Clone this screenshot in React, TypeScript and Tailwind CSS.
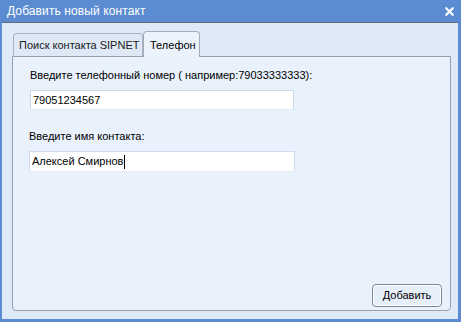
import { X } from 'lucide-react';

export default function App() {
  return (
    <div className="w-[461px] h-[322px] bg-[#5b8cd1] flex flex-col font-['Liberation_Sans',Arial,sans-serif] text-[11px] text-black select-none">
      {/* Title bar */}
      <div className="h-[22px] flex items-center justify-between pl-[7px] pr-[5px] shrink-0">
        <span className="text-white text-[12px] tracking-[0.1px]">Добавить новый контакт</span>
        <X className="text-white" size={13} strokeWidth={4} />
      </div>
      <div className="h-px bg-[#5f6b7c] ml-[2px] mr-[3px]" />

      {/* Body */}
      <div className="flex-1 ml-[2px] mr-[3px] mb-[3px] bg-[#dfeaf8] flex flex-col pl-[10px] pr-[7px] pt-[8px] pb-[8px]">
        {/* Tabs */}
        <div className="flex items-end h-[25px] pl-[1px]">
          <div className="h-[23px] w-[130px] pl-[5px] flex items-center bg-[#dfe9f6] border border-b-0 border-[#a9b4c2] rounded-t-[4px] text-[#1a1a1a]">
            Поиск контакта SIPNET
          </div>
          <div className="h-[26px] w-[57px] -mb-px relative z-10 pl-[6px] flex items-start pt-[5px] bg-[#eaf2fc] border border-b-0 border-[#a3adba] rounded-t-[4px]">
            Телефон
          </div>
        </div>

        {/* Panel */}
        <div className="flex-1 bg-[#e8f1fc] border border-[#9a9fa8] rounded-b-[4px] flex flex-col pl-[17px] pt-[11px] pr-[8px] pb-[3px]">
          <div className="leading-[14px]">Введите телефонный номер ( например:79033333333):</div>
          <div className="mt-[8px] w-[264px] h-[20px] bg-white border border-[#cfdbec] border-b-[#e4ecf6] flex items-center pl-[2px]">
            79051234567
          </div>

          <div className="mt-[19px] -ml-px leading-[14px]">Введите имя контакта:</div>
          <div className="mt-[8px] -ml-px w-[266px] h-[21px] bg-white border border-[#cfdbec] border-b-[#e4ecf6] flex items-center pl-[2px]">
            Алексей Смирнов<span className="inline-block w-px h-[14px] bg-black ml-px" />
          </div>

          <div className="flex-1" />
          <div className="flex justify-end">
            <button className="w-[70px] h-[23px] bg-[#e6eefa] border border-[#7d8796] rounded-[4px] shadow-[inset_0_0_0_1px_#ffffff] text-black">
              Добавить
            </button>
          </div>
        </div>
      </div>
    </div>
  );
}
